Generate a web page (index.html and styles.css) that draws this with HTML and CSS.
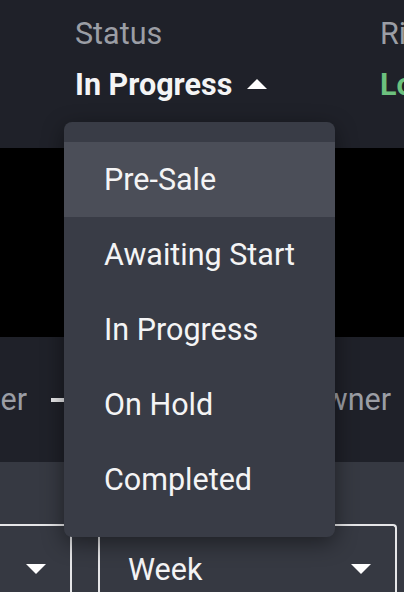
FILE: index.html
```html
<!DOCTYPE html>
<html lang="en">
<head>
  <meta charset="UTF-8">
  <title>Project Status</title>
  <link rel="stylesheet" href="styles.css">
</head>
<body>
  <div class="screen">
    <div class="header">
      <div class="field status-field">
        <div class="field-label">Status</div>
        <div class="field-value">In Progress <span class="caret-up"></span></div>
      </div>
      <div class="field">
        <div class="field-label">Risk</div>
        <div class="field-value risk-low">Low</div>
      </div>
    </div>

    <div class="preview"></div>

    <div class="people">
      <div class="people-left"><span>Project Manager</span></div>
      <span class="dash"></span>
      <div class="people-right">Owner</div>
    </div>

    <div class="filters">
      <div class="select select-left">
        <span>Project</span>
        <span class="caret-down"></span>
      </div>
      <div class="select select-right">
        <span>Week</span>
        <span class="caret-down"></span>
      </div>
    </div>

    <ul class="menu">
      <li class="menu-item active">Pre-Sale</li>
      <li class="menu-item">Awaiting Start</li>
      <li class="menu-item">In Progress</li>
      <li class="menu-item">On Hold</li>
      <li class="menu-item">Completed</li>
    </ul>
  </div>
</body>
</html>
```

FILE: styles.css
```css
html, body {
  margin: 0;
  padding: 0;
  background: #363942;
  overflow: hidden;
}

body {
  font-family: Roboto, 'Liberation Sans', sans-serif;
  font-size: 30.5px;
  color: #f4f4f5;
}

.screen {
  position: relative;
  width: 404px;
  height: 592px;
  overflow: hidden;
}

/* header with status / risk */
.header {
  height: 148px;
  background: #1f2129;
  display: flex;
  padding-left: 75px;
  box-sizing: border-box;
  padding-top: 16px;
}

.field {
  display: flex;
  flex-direction: column;
  gap: 16px;
  white-space: nowrap;
}

.status-field {
  width: 305px;
  flex-shrink: 0;
}

.field-label {
  color: #9b9ea5;
}

.field-value {
  font-weight: bold;
  display: flex;
  align-items: center;
}

.risk-low {
  color: #6cc17e;
}

.caret-up {
  margin-left: 15px;
  width: 0;
  height: 0;
  border-left: 10px solid transparent;
  border-right: 10px solid transparent;
  border-bottom: 10px solid #ffffff;
  margin-top: -2px;
}

.preview {
  height: 189px;
  background: #000000;
}

/* owner row */
.people {
  height: 125px;
  background: #1f2129;
  display: flex;
  align-items: center;
  padding-right: 13px;
  color: #9b9ea5;
  white-space: nowrap;
}

.people-left {
  width: 27px;
  display: flex;
  justify-content: flex-end;
  overflow: hidden;
}

.dash {
  margin-left: 24px;
  width: 30px;
  height: 4px;
  background: #e8e8ea;
}

.people-right {
  margin-left: auto;
}

/* select boxes */
.filters {
  display: flex;
  gap: 26px;
  padding: 62px 7px 0 0;
}

.select {
  height: 90px;
  box-sizing: border-box;
  border: 2px solid #e6e6e8;
  border-bottom: none;
  border-radius: 4px 4px 0 0;
  display: flex;
  justify-content: space-between;
  padding: 26px 24px 0 28px;
  color: #f4f4f5;
}

.select-left {
  margin-left: -200px;
  width: 272px;
  flex-shrink: 0;
}

.select-left span:first-child {
  visibility: hidden;
}

.select-right {
  flex: 1;
}

.caret-down {
  width: 0;
  height: 0;
  border-left: 10px solid transparent;
  border-right: 10px solid transparent;
  border-top: 10px solid #ffffff;
  margin-top: 12px;
}

/* dropdown overlay */
.menu {
  position: absolute;
  top: 122px;
  left: 64px;
  width: 271px;
  margin: 0;
  padding: 20px 0;
  list-style: none;
  background: #393c46;
  border-radius: 8px;
  box-shadow: 0 6px 22px rgba(0, 0, 0, 0.45);
}

.menu-item {
  height: 75px;
  display: flex;
  align-items: center;
  padding-left: 40px;
  color: #f4f4f5;
}

.menu-item.active {
  background: #4b4e58;
}
```
